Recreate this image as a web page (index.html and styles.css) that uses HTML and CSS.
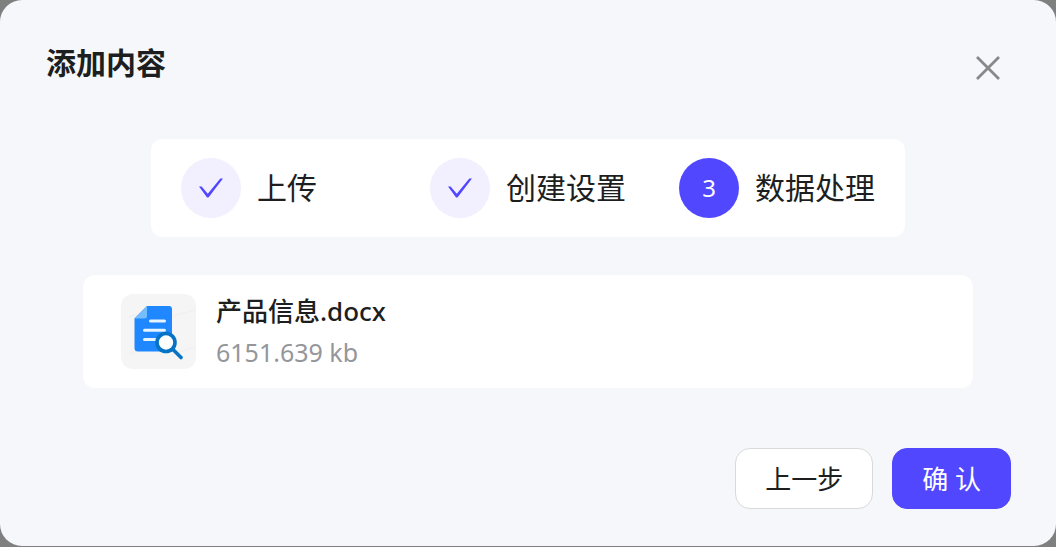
FILE: index.html
```html
<!DOCTYPE html>
<html lang="zh-CN">
<head>
  <meta charset="utf-8">
  <meta name="viewport" content="width=device-width, initial-scale=1">
  <title>添加内容</title>
  <link rel="stylesheet" href="styles.css">
</head>
<body>
  <main class="dialog" role="dialog" aria-labelledby="dialog-title">
    <header class="dialog-header">
      <h1 class="dialog-title" id="dialog-title">添加内容</h1>
      <button class="close" type="button" aria-label="关闭">
        <svg viewBox="0 0 24 24" width="24" height="24" aria-hidden="true">
          <path d="M1 1L23 23M23 1L1 23" fill="none" stroke="#878889" stroke-width="2.8"/>
        </svg>
      </button>
    </header>

    <ol class="steps">
      <li class="step">
        <span class="step-icon">
          <svg viewBox="0 0 24 20" width="24" height="20" aria-hidden="true">
            <path d="M0 8.6H2.6L8.8 15.8L21.3 .6H24L9.9 18.9Q8.8 20.1 7.7 18.9Z" fill="#5147ff"/>
          </svg>
        </span>
        <span class="step-label">上传</span>
      </li>
      <li class="step">
        <span class="step-icon">
          <svg viewBox="0 0 24 20" width="24" height="20" aria-hidden="true">
            <path d="M0 8.6H2.6L8.8 15.8L21.3 .6H24L9.9 18.9Q8.8 20.1 7.7 18.9Z" fill="#5147ff"/>
          </svg>
        </span>
        <span class="step-label">创建设置</span>
      </li>
      <li class="step" aria-current="step">
        <span class="step-icon step-icon-current">3</span>
        <span class="step-label">数据处理</span>
      </li>
    </ol>

    <section class="file">
      <svg class="file-icon" viewBox="0 0 75 75" width="75" height="75" aria-hidden="true">
        <rect width="75" height="75" rx="12" fill="#f5f5f5"/>
        <path d="M8 23L32 15M52 22L75 16M8 60L32 52M52 60L75 53" stroke="#f1f1f1" stroke-width="2"/>
        <path d="M26 12H48Q51 12 51 15V57.500H17Q13.500 57.500 13.500 54V24.500Z" fill="#1f87ff"/>
        <path d="M26 12V22Q26 24.500 23.500 24.500H13.500Z" fill="#76befb"/>
        <path d="M29.500 27H43.500M23.500 36.300H43.500M23.500 45.600H36" stroke="#e6f5ff" stroke-width="3" stroke-linecap="round"/>
        <path d="M52 55.500L60 63.500" stroke="#0673c5" stroke-width="3.600" stroke-linecap="round"/>
        <circle cx="45" cy="48.500" r="9" fill="#fff" stroke="#0673c5" stroke-width="3.600"/>
      </svg>
      <div class="file-info">
        <div class="file-name">产品信息.docx</div>
        <div class="file-size">6151.639 kb</div>
      </div>
    </section>

    <footer class="actions">
      <button class="btn" type="button">上一步</button>
      <button class="btn btn-primary" type="button">确 认</button>
    </footer>
  </main>
</body>
</html>
```
FILE: styles.css
```css
* {
  box-sizing: border-box;
}

body {
  margin: 0;
  background: #7f7f80;
  color: #1d1e20;
  font-family: "Noto Sans", "Noto Sans CJK SC", sans-serif;
}

.dialog {
  min-height: calc(100vh - 1px);
  padding: 40px 45px 36px;
  border-radius: 22px;
  background: #f5f7fb;
}

.dialog-header {
  display: flex;
  justify-content: space-between;
  align-items: flex-start;
  min-height: 99px;
  padding-left: 1px;
}

.dialog-title {
  margin: 0;
  font-size: 30px;
  line-height: 46px;
  font-weight: 700;
}

.close {
  display: flex;
  margin: 8px 3px 0 0;
  padding: 8px;
  border: 0;
  background: none;
  cursor: pointer;
}

.steps {
  display: flex;
  max-width: 754px;
  margin: 0 auto 38px;
  padding: 19px 30px;
  border-radius: 12px;
  background: #fff;
  list-style: none;
}

.step {
  display: flex;
  align-items: center;
  gap: 16px;
  flex: 1 1 0;
}

.step:last-child {
  flex: none;
}

.step-icon {
  display: flex;
  align-items: center;
  justify-content: center;
  width: 60px;
  height: 60px;
  flex: none;
  border-radius: 50%;
  background: #f2f0ff;
  font-size: 24px;
  line-height: 32px;
}

.step-icon-current {
  background: #5147ff;
  color: #fff;
}

.step-label {
  font-size: 30px;
  line-height: 46px;
  white-space: nowrap;
}

.file {
  display: flex;
  align-items: center;
  gap: 20px;
  margin: 0 38px 60px;
  padding: 19px 38px;
  border-radius: 12px;
  background: #fff;
}

.file-icon {
  flex: none;
}

.file-info {
  display: grid;
  gap: 7px;
}

.file-name {
  font-size: 26px;
  line-height: 34px;
  font-weight: 500;
}

.file-size {
  color: #95969a;
  font-size: 25px;
  line-height: 34px;
}

.actions {
  display: flex;
  justify-content: flex-end;
  gap: 19px;
}

.btn {
  padding: 11px 29px 9px;
  border: 1px solid #d9d9d9;
  border-radius: 15px;
  background: #fff;
  color: #1d1e20;
  font: inherit;
  font-size: 26px;
  line-height: 39px;
  cursor: pointer;
}

.btn-primary {
  border-color: #5147ff;
  background: #5147ff;
  color: #fff;
}
```
